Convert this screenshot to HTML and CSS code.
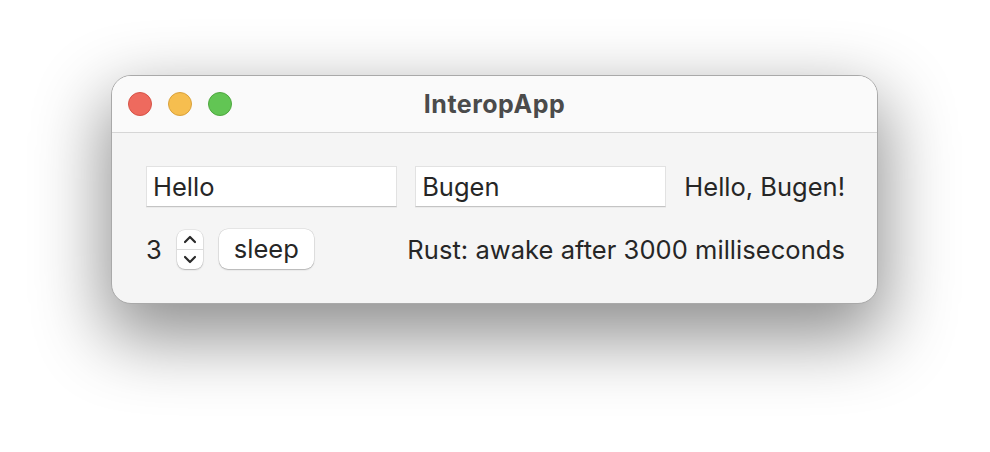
FILE: index.html
```html
<!DOCTYPE html>
<html>
<head>
<meta charset="utf-8">
<link rel="stylesheet" href="styles.css">
</head>
<body>
<div class="window">
  <div class="titlebar">
    <div class="lights">
      <span class="light red"></span>
      <span class="light yellow"></span>
      <span class="light green"></span>
    </div>
    <div class="title">InteropApp</div>
  </div>
  <div class="content">
    <div class="row">
      <div class="field">Hello</div>
      <div class="field">Bugen</div>
      <div class="label grow">Hello, Bugen!</div>
    </div>
    <div class="row row2">
      <div class="label num">3</div>
      <div class="stepper">
        <svg class="chev" width="14" height="9" viewBox="0 0 14 9"><path d="M2 7 L7 2 L12 7" fill="none" stroke="#2a2a2a" stroke-width="2.2" stroke-linecap="round" stroke-linejoin="round"/></svg>
        <div class="divider"></div>
        <svg class="chev" width="14" height="9" viewBox="0 0 14 9"><path d="M2 2 L7 7 L12 2" fill="none" stroke="#2a2a2a" stroke-width="2.2" stroke-linecap="round" stroke-linejoin="round"/></svg>
      </div>
      <div class="button">sleep</div>
      <div class="label grow">Rust: awake after 3000 milliseconds</div>
    </div>
  </div>
</div>
</body>
</html>
```

FILE: styles.css
```css
html, body {
  margin: 0;
  background: #ffffff;
}
body {
  min-height: 452px;
  box-sizing: border-box;
  padding: 75px 0 0 111px;
  font-family: "Inter", "Noto Sans", sans-serif;
  color: #262626;
}
.window {
  width: 765px;
  height: 227px;
  border: 1px solid #a9a9a9;
  border-radius: 20px;
  background: #f5f5f5;
  overflow: hidden;
  box-shadow: 0 28px 70px 6px rgba(0, 0, 0, 0.44);
  display: flex;
  flex-direction: column;
}
.titlebar {
  height: 56px;
  background: #fafafa;
  border-bottom: 1px solid #d6d6d6;
  display: flex;
  align-items: center;
  position: relative;
}
.lights {
  display: flex;
  gap: 16px;
  padding-left: 16px;
}
.light {
  width: 22px;
  height: 22px;
  border-radius: 50%;
  display: block;
}
.red { background: #ee6a5e; border: 1px solid #d65347; }
.yellow { background: #f6be4f; border: 1px solid #d9a13b; }
.green { background: #62c554; border: 1px solid #4ea73f; }
.title {
  position: absolute;
  left: 0;
  right: 0;
  top: 0;
  bottom: 0;
  display: flex;
  align-items: center;
  justify-content: center;
  font-weight: 700;
  font-size: 25px;
  letter-spacing: 0.5px;
  color: #4b4b4b;
  padding-bottom: 1px;
}
.content {
  flex: 1;
  padding: 33px 32px 0 34px;
  display: flex;
  flex-direction: column;
  gap: 23px;
}
.row {
  display: flex;
  align-items: center;
  height: 40px;
}
.field {
  width: 244px;
  height: 39px;
  background: #ffffff;
  border: 1px solid #e2e2e2;
  border-bottom: 1px solid #c4c4c4;
  box-shadow: 0 1px 0 rgba(0, 0, 0, 0.04);
  padding-left: 6px;
  display: flex;
  align-items: center;
  font-size: 25.5px;
  margin-right: 18px;
}
.label {
  font-size: 25.5px;
  white-space: nowrap;
}
.row2 .grow {
  letter-spacing: 0.05px;
}
.grow {
  flex: 1;
  text-align: right;
}
.num {
  margin-right: 15px;
}
.stepper {
  width: 26px;
  height: 39px;
  background: #fff;
  border-radius: 8px;
  box-shadow: 0 0 0 0.5px rgba(0, 0, 0, 0.12), 0 1px 1.5px rgba(0, 0, 0, 0.22);
  display: flex;
  flex-direction: column;
  align-items: center;
  justify-content: space-between;
  padding: 5px 0;
  box-sizing: border-box;
  margin-right: 16px;
}
.divider {
  width: 26px;
  height: 1px;
  background: #dcdcdc;
}
.chev { display: block; }
.button {
  width: 95px;
  height: 40px;
  background: #fff;
  border-radius: 9px;
  box-shadow: 0 0 0 0.5px rgba(0, 0, 0, 0.12), 0 1px 1.5px rgba(0, 0, 0, 0.22);
  display: flex;
  align-items: center;
  justify-content: center;
  font-size: 25.5px;
  padding-bottom: 2px;
  box-sizing: border-box;
}
```
